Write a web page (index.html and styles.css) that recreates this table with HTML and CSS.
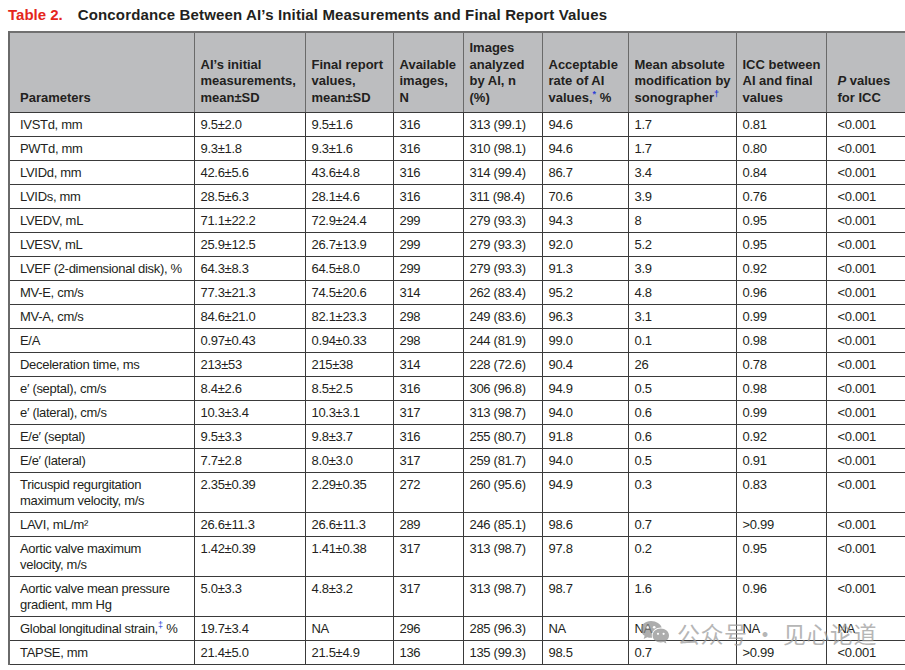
FILE: index.html
```html
<!DOCTYPE html>
<html lang="en">
<head>
<meta charset="utf-8">
<title>Table 2</title>
<link rel="stylesheet" href="styles.css">
</head>
<body>
<div class="page">
  <h1 class="title"><span class="label">Table 2.</span><span class="caption">Concordance Between AI’s Initial Measurements and Final Report Values</span></h1>
  <table class="data">
    <colgroup>
      <col class="c1"><col class="c2"><col class="c3"><col class="c4"><col class="c5"><col class="c6"><col class="c7"><col class="c8"><col class="c9">
    </colgroup>
    <thead>
      <tr>
        <th class="first">Parameters</th>
        <th>AI’s initial<br>measurements,<br>mean±SD</th>
        <th>Final report<br>values,<br>mean±SD</th>
        <th>Available<br>images,<br>N</th>
        <th>Images<br>analyzed<br>by AI, n<br>(%)</th>
        <th>Acceptable<br>rate of AI<br>values,<sup class="fn">*</sup> %</th>
        <th>Mean absolute<br>modification by<br>sonographer<sup class="fn">†</sup></th>
        <th>ICC between<br>AI and final<br>values</th>
        <th class="last"><i>P</i> values<br>for ICC</th>
      </tr>
    </thead>
    <tbody>
      <tr><td class="first">IVSTd, mm</td><td>9.5±2.0</td><td>9.5±1.6</td><td>316</td><td>313 (99.1)</td><td>94.6</td><td>1.7</td><td>0.81</td><td class="last">&lt;0.001</td></tr>
      <tr><td class="first">PWTd, mm</td><td>9.3±1.8</td><td>9.3±1.6</td><td>316</td><td>310 (98.1)</td><td>94.6</td><td>1.7</td><td>0.80</td><td class="last">&lt;0.001</td></tr>
      <tr><td class="first">LVIDd, mm</td><td>42.6±5.6</td><td>43.6±4.8</td><td>316</td><td>314 (99.4)</td><td>86.7</td><td>3.4</td><td>0.84</td><td class="last">&lt;0.001</td></tr>
      <tr><td class="first">LVIDs, mm</td><td>28.5±6.3</td><td>28.1±4.6</td><td>316</td><td>311 (98.4)</td><td>70.6</td><td>3.9</td><td>0.76</td><td class="last">&lt;0.001</td></tr>
      <tr><td class="first">LVEDV, mL</td><td>71.1±22.2</td><td>72.9±24.4</td><td>299</td><td>279 (93.3)</td><td>94.3</td><td>8</td><td>0.95</td><td class="last">&lt;0.001</td></tr>
      <tr><td class="first">LVESV, mL</td><td>25.9±12.5</td><td>26.7±13.9</td><td>299</td><td>279 (93.3)</td><td>92.0</td><td>5.2</td><td>0.95</td><td class="last">&lt;0.001</td></tr>
      <tr><td class="first">LVEF (2-dimensional disk), %</td><td>64.3±8.3</td><td>64.5±8.0</td><td>299</td><td>279 (93.3)</td><td>91.3</td><td>3.9</td><td>0.92</td><td class="last">&lt;0.001</td></tr>
      <tr><td class="first">MV-E, cm/s</td><td>77.3±21.3</td><td>74.5±20.6</td><td>314</td><td>262 (83.4)</td><td>95.2</td><td>4.8</td><td>0.96</td><td class="last">&lt;0.001</td></tr>
      <tr><td class="first">MV-A, cm/s</td><td>84.6±21.0</td><td>82.1±23.3</td><td>298</td><td>249 (83.6)</td><td>96.3</td><td>3.1</td><td>0.99</td><td class="last">&lt;0.001</td></tr>
      <tr><td class="first">E/A</td><td>0.97±0.43</td><td>0.94±0.33</td><td>298</td><td>244 (81.9)</td><td>99.0</td><td>0.1</td><td>0.98</td><td class="last">&lt;0.001</td></tr>
      <tr><td class="first">Deceleration time, ms</td><td>213±53</td><td>215±38</td><td>314</td><td>228 (72.6)</td><td>90.4</td><td>26</td><td>0.78</td><td class="last">&lt;0.001</td></tr>
      <tr><td class="first">e′ (septal), cm/s</td><td>8.4±2.6</td><td>8.5±2.5</td><td>316</td><td>306 (96.8)</td><td>94.9</td><td>0.5</td><td>0.98</td><td class="last">&lt;0.001</td></tr>
      <tr><td class="first">e′ (lateral), cm/s</td><td>10.3±3.4</td><td>10.3±3.1</td><td>317</td><td>313 (98.7)</td><td>94.0</td><td>0.6</td><td>0.99</td><td class="last">&lt;0.001</td></tr>
      <tr><td class="first">E/e′ (septal)</td><td>9.5±3.3</td><td>9.8±3.7</td><td>316</td><td>255 (80.7)</td><td>91.8</td><td>0.6</td><td>0.92</td><td class="last">&lt;0.001</td></tr>
      <tr><td class="first">E/e′ (lateral)</td><td>7.7±2.8</td><td>8.0±3.0</td><td>317</td><td>259 (81.7)</td><td>94.0</td><td>0.5</td><td>0.91</td><td class="last">&lt;0.001</td></tr>
      <tr><td class="first">Tricuspid regurgitation<br>maximum velocity, m/s</td><td>2.35±0.39</td><td>2.29±0.35</td><td>272</td><td>260 (95.6)</td><td>94.9</td><td>0.3</td><td>0.83</td><td class="last">&lt;0.001</td></tr>
      <tr><td class="first">LAVI, mL/m²</td><td>26.6±11.3</td><td>26.6±11.3</td><td>289</td><td>246 (85.1)</td><td>98.6</td><td>0.7</td><td>&gt;0.99</td><td class="last">&lt;0.001</td></tr>
      <tr><td class="first">Aortic valve maximum<br>velocity, m/s</td><td>1.42±0.39</td><td>1.41±0.38</td><td>317</td><td>313 (98.7)</td><td>97.8</td><td>0.2</td><td>0.95</td><td class="last">&lt;0.001</td></tr>
      <tr><td class="first">Aortic valve mean pressure<br>gradient, mm Hg</td><td>5.0±3.3</td><td>4.8±3.2</td><td>317</td><td>313 (98.7)</td><td>98.7</td><td>1.6</td><td>0.96</td><td class="last">&lt;0.001</td></tr>
      <tr><td class="first">Global longitudinal strain,<sup class="fn">‡</sup> %</td><td>19.7±3.4</td><td>NA</td><td>296</td><td>285 (96.3)</td><td>NA</td><td>NA</td><td>NA</td><td class="last">NA</td></tr>
      <tr><td class="first">TAPSE, mm</td><td>21.4±5.0</td><td>21.5±4.9</td><td>136</td><td>135 (99.3)</td><td>98.5</td><td>0.7</td><td>&gt;0.99</td><td class="last">&lt;0.001</td></tr>
    </tbody>
  </table>
  <div class="watermark">
    <svg class="wm-icon" width="30" height="26" viewBox="0 0 30 26" aria-hidden="true">
      <path d="M11 1C5.2 1 1 4.8 1 9.4c0 2.6 1.4 4.9 3.6 6.4L3.7 19l3.5-1.8c1.2.4 2.5.6 3.8.6.4 0 .8 0 1.2-.1-.3-.8-.4-1.6-.4-2.4 0-4.4 4.1-7.9 9.2-7.9h.7C20.7 4 16.3 1 11 1z" fill="#8e8e8e"/>
      <circle cx="7.6" cy="7.2" r="1.3" fill="#fff"/>
      <circle cx="14.2" cy="7.2" r="1.3" fill="#fff"/>
      <path d="M29 15.4c0-3.9-3.7-7-8.2-7s-8.2 3.1-8.2 7 3.7 7 8.2 7c.9 0 1.9-.1 2.7-.4l2.9 1.5-.7-2.6c2-1.3 3.3-3.2 3.3-5.5z" fill="#8e8e8e"/>
      <circle cx="18" cy="13.8" r="1.1" fill="#fff"/>
      <circle cx="23.6" cy="13.8" r="1.1" fill="#fff"/>
    </svg>
    <span class="wm-text">公众号<span class="wm-dot">·</span>见心论道</span>
  </div>
</div>
</body>
</html>
```

FILE: styles.css
```css
html, body {
  margin: 0;
  padding: 0;
  overflow: hidden;
  background: #ffffff;
}

body {
  font-family: "Liberation Sans", Arial, Helvetica, sans-serif;
  color: #231f20;
}

.page {
  position: relative;
  padding: 6px 0 0 8px;
}

.title {
  margin: 0 0 7px 0;
  font-size: 15px;
  line-height: 18px;
  font-weight: bold;
  color: #231f20;
  white-space: nowrap;
}

.title .label {
  color: #e4261c;
  margin-right: 15px;
}

.title .caption {
  letter-spacing: 0.15px;
}

.data {
  border-collapse: collapse;
  table-layout: fixed;
  width: 900px;
  font-size: 13px;
}

.c1 { width: 185px; }
.c2 { width: 111px; }
.c3 { width: 88px; }
.c4 { width: 70px; }
.c5 { width: 79px; }
.c6 { width: 86px; }
.c7 { width: 108px; }
.c8 { width: 90px; }
.c9 { width: 83px; }

.data th {
  background: #bcbdbf;
  font-weight: bold;
  text-align: left;
  vertical-align: bottom;
  line-height: 16.5px;
  padding: 7px 4px 6px 6px;
  border: 1px solid #6a6a6a;
  border-bottom-color: #3a3a3a;
  white-space: nowrap;
}

.data thead tr {
  border-top: 2px solid #707070;
}

.data td {
  text-align: left;
  vertical-align: top;
  line-height: 16px;
  padding: 4px 4px 3px 6px;
  border: 1px solid #3a3a3a;
  letter-spacing: -0.3px;
  white-space: nowrap;
  color: #231f20;
}

.data .first {
  padding-left: 10px;
  border-left: 2px solid #6a6a6a;
}

.data .last {
  padding-left: 11px;
}

.fn {
  color: #2b3fd6;
  font-size: 9px;
  line-height: 0;
  vertical-align: 5px;
  letter-spacing: 0;
}

.watermark {
  position: absolute;
  left: 640px;
  top: 619px;
  display: flex;
  align-items: center;
  gap: 7px;
  opacity: 0.72;
  pointer-events: none;
}

.wm-icon {
  display: block;
}

.wm-text {
  font-family: "Noto Sans CJK SC", "Noto Sans", sans-serif;
  font-size: 23px;
  line-height: 28px;
  color: #9a9a9a;
  letter-spacing: 0.5px;
}

.wm-dot {
  margin: 0 6px;
}
```
